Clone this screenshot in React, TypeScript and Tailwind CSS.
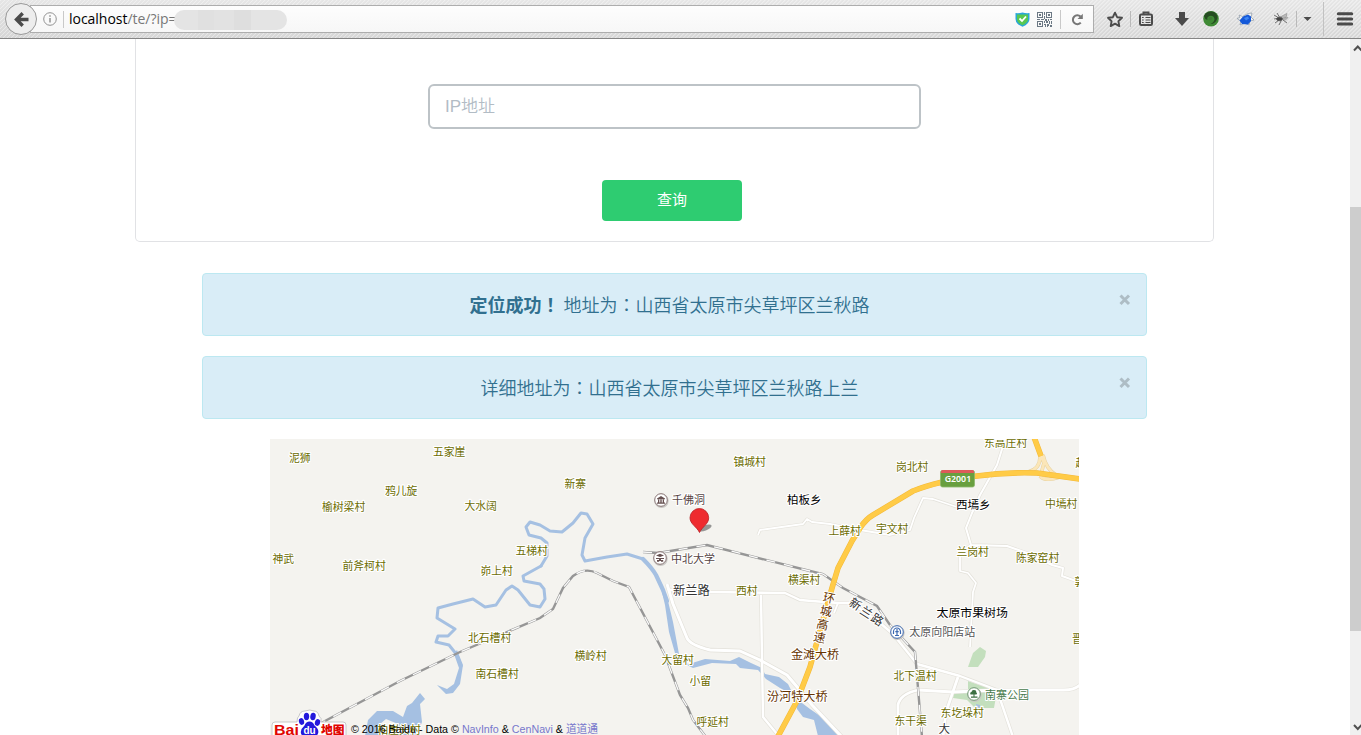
import React from "react";

type Tone = "village" | "town" | "poi" | "bridge" | "park" | "station" | "road";

type Label = { t: string; x: number; y: number; tone?: Tone; size?: number };

const TONES: Record<Tone, string> = {
  village: "fill-[#6c6c00]",
  town: "fill-[#000000]",
  poi: "fill-[#554444]",
  bridge: "fill-[#663300]",
  park: "fill-[#477a4c]",
  station: "fill-[#555555]",
  road: "fill-[#333333]",
};

const LABELS: Label[] = [
  { t: "泥狮", x: 289, y: 458 },
  { t: "五家崖", x: 433, y: 451.5 },
  { t: "鸦儿旋", x: 385, y: 491 },
  { t: "榆树梁村", x: 322, y: 507 },
  { t: "大水阔", x: 464.5, y: 505.5 },
  { t: "五梯村", x: 515.5, y: 550.5 },
  { t: "神武", x: 272.5, y: 559 },
  { t: "前斧柯村", x: 342.5, y: 565.5 },
  { t: "峁上村", x: 480.5, y: 570.5 },
  { t: "新寨", x: 564.5, y: 484 },
  { t: "镇城村", x: 733.5, y: 462 },
  { t: "千佛洞", x: 672, y: 499.5, tone: "poi", size: 11 },
  { t: "中北大学", x: 671, y: 558, tone: "poi", size: 11 },
  { t: "柏板乡", x: 787, y: 499.5, tone: "town", size: 11.5 },
  { t: "横渠村", x: 788, y: 579.5 },
  { t: "东高庄村", x: 984, y: 442.5 },
  { t: "岗北村", x: 896, y: 466.5 },
  { t: "上薛村", x: 828.5, y: 530.5 },
  { t: "宇文村", x: 876, y: 529 },
  { t: "西墕乡", x: 956, y: 504, tone: "town", size: 11.5 },
  { t: "中墕村", x: 1045, y: 504 },
  { t: "兰岗村", x: 956.5, y: 551.5 },
  { t: "陈家窑村", x: 1016, y: 557.5 },
  { t: "赵", x: 1075.5, y: 463 },
  { t: "郭", x: 1074.5, y: 582 },
  { t: "北石槽村", x: 468, y: 638 },
  { t: "南石槽村", x: 475.5, y: 674 },
  { t: "柏崖头村", x: 377.5, y: 730 },
  { t: "新兰路", x: 673, y: 590, tone: "road", size: 12.3 },
  { t: "西村", x: 736, y: 590.5 },
  { t: "横岭村", x: 574.5, y: 655.5 },
  { t: "大留村", x: 661.5, y: 660 },
  { t: "金滩大桥", x: 791, y: 654.5, tone: "bridge", size: 12 },
  { t: "小留", x: 689.5, y: 680.5 },
  { t: "汾河特大桥", x: 767, y: 696.5, tone: "bridge", size: 12.1 },
  { t: "呼延村", x: 696.5, y: 722 },
  { t: "太原市果树场", x: 936.5, y: 612.5, tone: "town", size: 11.9 },
  { t: "太原向阳店站", x: 909.2, y: 631.5, tone: "station", size: 11 },
  { t: "晋", x: 1072, y: 639 },
  { t: "北下温村", x: 893.5, y: 676 },
  { t: "南寨公园", x: 985, y: 694, tone: "park", size: 11 },
  { t: "东圪垛村", x: 940.6, y: 713 },
  { t: "东干渠", x: 894.5, y: 720.5 },
  { t: "大", x: 938.5, y: 728, tone: "road", size: 11.5 },
];

const TURNED = [
  { t: "环", x: 829, y: 598, a: 12, c: "fill-[#663300]" },
  { t: "城", x: 826, y: 611, a: 12, c: "fill-[#663300]" },
  { t: "高", x: 822.5, y: 624.5, a: 12, c: "fill-[#663300]" },
  { t: "速", x: 819.5, y: 637.5, a: 12, c: "fill-[#663300]" },
  { t: "新", x: 855.5, y: 604, a: 33, c: "fill-[#333333]" },
  { t: "兰", x: 866.5, y: 612, a: 33, c: "fill-[#333333]" },
  { t: "路", x: 877.5, y: 619.5, a: 33, c: "fill-[#333333]" },
];

const ROADS: { d: string; w: number }[] = [
  { w: 1.8, d: "M758 535L760 530L803 524L807 519L812 522L830 524L860 530L890 535L910 530L914 518L923 498L933 499L957 507" },
  { w: 2, d: "M1003 446L997 465L980 495L972 513L966 528L971 545L1007 546L1027 553L1052 565L1063 568L1062 576L1079 582" },
  { w: 1.8, d: "M971 545L960 553L960 571L968 573L976 583L973 592L970 647" },
  { w: 3, d: "M667 584L673 604L687 638Q690 645 710 650L740 651L760 660L787 675L798 688L812 705L842 737" },
  { w: 2.4, d: "M670 590L710 592L785 593L800 600L812 601L838 603L852 603L880 623L893 634L917 664L960 676L997 690L1013 737" },
  { w: 2.4, d: "M761 595L762 658L763 717L777 734" },
  { w: 2, d: "M838 603L834 613" },
  { w: 2.8, d: "M898 736L898 705Q900 694 918 690L953 692L997 690L1064 690Q1074 690 1080 685" },
  { w: 2.8, d: "M958 677L946 712L943 737" },
];

const RAILS = [
  "M318 726L325 721L400 681L460 652L540 618L553 609L563 588L573 576Q585 567 597 573L613 581L629 587L665 655L680 695L688 708L693 720L706 737",
  "M643 552L658 553L707 545L810 571L823 574L843 588L877 606L890 625L915 652L918 688L922 737",
];

const HIGHWAY =
  "M776 740L797 701L810 667L823 620L832 588L838 568L852 541L860 528Q866 519 873 515L913 491Q938 481 977 476Q1005 472 1037 473L1080 479M1034 437L1041 456";

const RAMP = "M1041 455L1044 463L1041 474M1043 455Q1046 469 1056 475M1040 457Q1040 469 1028 472M1040 476Q1045 482 1060 477";

function Railway({ d }: { d: string }) {
  return (
    <g fill="none">
      <path d={d} stroke="#969696" strokeWidth="2.4" />
      <path d={d} stroke="#fafafa" strokeWidth="1.3" strokeDasharray="9 9" />
    </g>
  );
}

function PoiRing({ x, y, c }: { x: number; y: number; c: string }) {
  return (
    <>
      <circle cx={x + 0.5} cy={y + 0.8} r="7.2" fill="#c9c7c4" />
      <circle cx={x} cy={y} r="6.3" fill="#fff" stroke={c} strokeWidth="1" />
    </>
  );
}

function BaiduMap() {
  return (
    <svg className="block h-[296px] w-[809px] shrink-0 bg-[#f4f3ef]" viewBox="270 439 809 296">
      <path d="M968 667L973 653L980 647L986 651L985 657L978 667Z" fill="#c3dfbd" />
      <path d="M968 681L997 691L994 708L975 708L967 700L953 698L954 693L968 693Z" fill="#c3dfbd" />
      <path d="M976 704l4 1v3l-4-1z" fill="#a5bfdf" />
      <g fill="none" stroke="#a5c0e2" strokeLinejoin="round" strokeLinecap="round">
        <path
          strokeWidth="3"
          d="M541 566L547 556L547 543L541 538L529 535L526 527L530 522L540 525L550 531L562 532L573 523L581 513L587 514L593 524L585 538L582 555L585 561L607 557L627 554L643 559"
        />
        <path strokeWidth="4.2" d="M643 559Q652 568 656 575L663 590L667 601" />
        <path
          strokeWidth="3"
          d="M541 566L523 576L524 581L540 584L544 589L545 599L540 607L530 605L518 590L512 586L506 590L496 605L485 607L473 599L453 604L438 608L437 618L455 629L448 636L438 636L436 642L449 645L457 655L461 666"
        />
      </g>
      <path d="M457 650L463 665L460 684L453 693L446 694L437 685L447 689L454 684L459 668L454 654Z" fill="#a5c0e2" />
      <path d="M661 588L668 601L673 622L679 654L675 653L669 632L665 605Z" fill="#a5c0e2" />
      <path d="M677 660L689 664L705 659L730 661L739 657L751 663L762 668L765 674L779 677L788 684L791 690L797 692L798 700L810 709L829 722L840 736L818 736L814 720L803 717L797 709L795 696L780 688L766 679L758 670L740 668L736 664L712 663L693 668Z" fill="#a5c0e2" />
      <path
        fillRule="evenodd"
        d="M365 736L368 720L377 711L393 711L403 717L407 706L412 703L420 693L425 699L420 704L422 722L416 737L404 737L398 724L386 719L380 724L379 737Z"
        fill="#a5c0e2"
      />
      <g fill="none" strokeLinejoin="round">
        {ROADS.map((r) => (
          <path key={r.d} d={r.d} stroke="#e3e1da" strokeWidth={r.w + 1.3} />
        ))}
        {ROADS.map((r) => (
          <path key={r.d} d={r.d} stroke="#ffffff" strokeWidth={r.w} />
        ))}
      </g>
      {RAILS.map((d) => (
        <Railway key={d} d={d} />
      ))}
      <g fill="none" strokeLinejoin="round">
        <path d={RAMP} stroke="#e5cf9c" strokeWidth="3.6" />
        <path d={RAMP} stroke="#fbe6b8" strokeWidth="2.8" />
        <path d={HIGHWAY} stroke="#f3b93a" strokeWidth="5.6" />
        <path d={HIGHWAY} stroke="#ffcb47" strokeWidth="4.6" />
      </g>
      <g>
        <rect x="940.5" y="470.5" width="34" height="16.5" rx="2" fill="#689f3f" stroke="#8db86d" strokeWidth="0.8" />
        <path d="M941 473v-1.500q0-1.500 1.500-1.500h30q1.500 0 1.500 1.500v1.500z" fill="#dd5a5a" />
        <text x="944.7" y="482.300" fill="#fff" textLength="26.5" lengthAdjust="spacingAndGlyphs" className="font-['Noto_Sans'] text-[9px] font-semibold">
          G2001
        </text>
      </g>

      <g className="font-['Noto_Sans_CJK_SC',sans-serif]" stroke="#fff" strokeWidth="2.2" strokeLinejoin="round" paintOrder="stroke">
        {LABELS.map((l) => (
          <text
            key={l.t + l.x}
            x={l.x}
            y={l.y + 0.5 + (l.size ?? 10.8) * 0.37}
            fontSize={l.size ?? 10.8}
            className={TONES[l.tone ?? "village"]}
          >
            {l.t}
          </text>
        ))}
        {TURNED.map((l) => (
          <text
            key={l.t + l.x}
            x={l.x}
            y={l.y + 4.4}
            fontSize="12"
            textAnchor="middle"
            transform={`rotate(${l.a} ${l.x} ${l.y})`}
            className={l.c}
          >
            {l.t}
          </text>
        ))}
      </g>

      <PoiRing x={661} y={500} c="#8a7676" />
      <path d="M657 498.500l4-2.500 4 2.500v.7h-8zM658 499.500h1.300v3H658zM660.300 499.500h1.400v3h-1.400zM662.700 499.500h1.300v3h-1.300zM657 502.600h8v1.200h-8z" fill="#665050" />
      <PoiRing x={660} y={558} c="#8a7676" />
      <path d="M656 555.500l4-1.800 4 1.800-4 1.600zM656 558h8v1.100h-8zM657 560h2.200v1.800H657zM661 560h2.200v1.800H661zM659 559h2v2h-2z" fill="#665050" />
      <PoiRing x={897} y={632} c="#3c69b1" />
      <path d="M893.500 634v-2.300a3.500 3.700 0 0 1 7 0v2.300M897 629v6M895 635.500h4M895.300 631.700h3.400" fill="none" stroke="#3c69b1" strokeWidth="1.200" />
      <PoiRing x={974} y={694} c="#6f9a72" />
      <path d="M970.500 694.500q-1-2 1-2.500.3-2.200 2.500-2 2.500 0 2.200 2.300 1.600.8.300 2.200h-2v2h3v1.300h-6.500v-1.300h2.500v-2z" fill="#3c7042" />

      <ellipse cx="705" cy="528" rx="7" ry="2.600" fill="#777" opacity="0.75" transform="rotate(-20 705 528)" />
      <path d="M699.500 532.500C697 527 690 524 690 517.800a9.300 9.200 0 0 1 18.700 0C708.700 524 702 527 699.500 532.500z" fill="#ee2b2f" stroke="#b62024" strokeWidth="0.8" />

      <g>
        <path d="M275 722h22q0-5 2-6 1-5 6-5 5-2 9 0 4 0 5 5 3 2 2 6h22q3 0 3 3v12h-74v-12q0-3 3-3z" fill="#fff" stroke="#bbb" strokeWidth="0.8" />
        <text x="274" y="735" className="fill-[#e10601] font-['Liberation_Sans'] text-[15.5px] font-bold" textLength="25" lengthAdjust="spacingAndGlyphs">
          Bai
        </text>
        <g fill="#2319dc">
          <ellipse cx="301.500" cy="721.500" rx="2.600" ry="3.400" transform="rotate(-15 301.500 721.500)" />
          <ellipse cx="306.500" cy="716.500" rx="2.700" ry="3.700" />
          <ellipse cx="313" cy="716.500" rx="2.700" ry="3.700" transform="rotate(10 313 716.500)" />
          <ellipse cx="317.500" cy="722.500" rx="2.600" ry="3.400" transform="rotate(15 317.500 722.500)" />
          <path d="M309.500 721.500q3.500 0 5 4 5 4 3.500 8-1 3-4 3h-9q-3 0-4-3-1-4 3.500-8 1.500-4 5-4z" />
        </g>
        <text x="309.500" y="733.500" textAnchor="middle" className="fill-white font-['Liberation_Sans'] text-[10px] font-bold">
          du
        </text>
        <text x="321" y="734" className="fill-[#e10601] font-['Noto_Sans_CJK_SC'] text-[11.8px] font-black">
          地图
        </text>
      </g>
      <text x="351" y="733" textLength="247" lengthAdjust="spacingAndGlyphs" className="fill-black font-['Liberation_Sans','Noto_Sans_CJK_SC',sans-serif] text-[11px]">
        © 2016 Baidu - Data © <tspan className="fill-[#7777cc]">NavInfo</tspan> &amp; <tspan className="fill-[#7777cc]">CenNavi</tspan> &amp;{" "}
        <tspan className="fill-[#7777cc]">道道通</tspan>
      </text>
    </svg>
  );
}

function QrIcon() {
  return (
    <svg className="size-[15px]" viewBox="0 0 15 15" fill="#6b7884" shapeRendering="crispEdges">
      <path fillRule="evenodd" d="M0 0h6v6H0zM1 1v4h4V1zM9 0h6v6H9zM10 1v4h4V1zM0 9h6v6H0zM1 10v4h4v-4z" />
      <path d="M2 2h2v2H2zM11 2h2v2h-2zM2 11h2v2H2zM7 0h1v3H7zM7 4h1v3H7zM0 7h3v1H0zM4 7h3v1H4zM8 7h2v2H8zM11 7h1v2h-1zM13 7h2v1h-2zM7 9h1v2H7zM9 9h2v2H9zM12 9h1v2h-1zM14 9h1v3h-1zM7 12h2v1H7zM8 13h1v2H8zM10 12h2v2h-2zM12 11h1v1h-1zM13 13h2v2h-2zM10 14h1v1h-1z" />
    </svg>
  );
}

function Toolbar() {
  return (
    <header className="relative h-[39px] shrink-0 border-b border-[#858585] bg-[repeating-linear-gradient(135deg,#ffffff66_0px_0.7px,transparent_1.4px_2.83px),linear-gradient(#e6e6e6,#d6d6d6)]">
      <div className="flex h-[38px] items-center pl-[30px]">
        <div className="flex h-7 w-[1064px] items-center border border-[#adadad] bg-[linear-gradient(#fdfdfd,#f7f7f7)] pl-[12px]">
          <svg className="size-[14px]" viewBox="0 0 14 14" fill="none" stroke="#929292">
            <circle cx="7" cy="7" r="6.300" />
            <path d="M7 6v4.500M7 3.300v1.500" strokeWidth="1.500" />
          </svg>
          <i className="ml-[6px] mr-[5px] h-[17px] w-px bg-[#c9c9c9]" />
          <span className="font-['Open_Sans',sans-serif] text-[14px] leading-none tracking-[-0.03px] text-[#777]">
            <span className="text-black">localhost</span>/te/?ip=
          </span>
          <i className="-ml-[2px] mt-[2px] flex h-5 w-[113px] overflow-hidden rounded-full bg-[#e4e4e4]">
            <i className="ml-6 w-4 bg-[#e0e0e0]" />
            <i className="w-5 bg-[#e2e2e2]" />
            <i className="w-[17px] bg-[#dedede]" />
          </i>
          <div className="ml-auto flex items-center pr-[10px]">
            <svg className="size-[15px]" viewBox="0 0 15 15">
              <path d="M.5 1Q4 1.500 7.500.5 11 1.500 14.500 1v6q0 5-7 7.700Q.5 12 .5 7z" fill="#29a6d9" />
              <path d="M2 2.500h11V7q0 4-5.500 6.300Q2 11 2 7z" fill="#58c850" />
              <path d="M4.500 6.500l2.500 2.500 4-4.500" fill="none" stroke="#fff" strokeWidth="1.800" />
            </svg>
            <i className="w-[7px]" />
            <QrIcon />
            <i className="ml-[8px] mr-[10px] h-[19px] w-px bg-[#c9c9c9]" />
            <svg className="mr-[-1px] size-[13px]" viewBox="0 0 13 13" fill="none" stroke="#777" strokeWidth="2">
              <path d="M9.800 9.700A4.500 4.500 0 1 1 9.500 3.500" />
              <path d="M11.800.7v5.300H6.500z" fill="#777" stroke="none" />
            </svg>
          </div>
        </div>
        <svg className="h-[38px] w-[267px] shrink-0" viewBox="1094 0 267 38">
          <path d="M1115 12.700l2.100 4.500 4.900.6-3.600 3.400.9 4.900-4.300-2.400-4.300 2.400.9-4.900-3.600-3.400 4.900-.6z" fill="none" stroke="#4b4b4b" strokeWidth="1.900" strokeLinejoin="round" />
          <path d="M1130.500 11v16M1296.500 11v16" stroke="#b9b9b9" />
          <path d="M1323.500 2v34" stroke="#c2c2c2" />
          <g fill="none" stroke="#4b4b4b">
            <rect x="1140" y="14.500" width="12" height="10.500" rx="1.200" strokeWidth="2" />
            <path d="M1143.500 14v-1.500h5V14" strokeWidth="2" />
            <path d="M1142 17.500h1.700M1145.500 17.500h5M1142 20h1.700M1145.500 20h5M1142 22.500h1.700M1145.500 22.500h5" strokeWidth="1.100" />
          </g>
          <path d="M1179 12h6v6h4l-7 8-7-8h4z" fill="#4b4b4b" />
          <circle cx="1211" cy="18.800" r="7.800" fill="#3f8a35" />
          <path d="M1204 16q2-5 8-4.500 5.500 1 5.500 6.500-2 6-7 6 4-2 4-5-1-4-5-3-3 1-2 4-3-1-3.500-4z" fill="#254c21" />
          <path d="M1208.500 18q2-2 4 0-1 3-4 2z" fill="#3f7a35" />
          <path d="M1239 15l3.500 1.500 5.500-3 4-0.500-1 4 3 3-4 1-1 4-4-2-5 2 1-4-4-2.500 3-1z" fill="#f4f4f4" stroke="#8b98a6" strokeWidth="0.700" />
          <path d="M1239.500 20.500l3.500-4 5-2 3 2v4.500l-3 3.500-6-.5z" fill="#1559d8" />
          <path d="M1244 18l4-1.500 1 2-3 2z" fill="#3d86f4" />
          <g stroke="#555" strokeWidth="0.800" fill="none">
            <path d="M1274 15l5 3-5 1M1275 23l4-3M1279 25l2-4M1277 13l3 5M1283 20l4 3" />
            <path d="M1280 17l7-3.500-1 4zM1282 18.500l6-1-3 3z" fill="#bbb" stroke="#999" />
            <ellipse cx="1279.500" cy="19" rx="3" ry="1.800" fill="#444" />
          </g>
          <path d="M1303.500 17h8l-4 4z" fill="#4b4b4b" />
          <path d="M1338.300 13.700h13.400M1338.300 18.900h13.400M1338.300 24.100h13.400" stroke="#4b4b4b" strokeWidth="3" strokeLinecap="round" />
        </svg>
      </div>
      <span className="absolute left-[5px] top-[3px] flex size-8 items-center justify-center rounded-full border border-[#999] bg-[#ededed]">
        <svg className="size-[15px]" viewBox="0 0 15 15" fill="none" stroke="#4b4b4b" strokeWidth="3.400">
          <path d="M8.700 1.200L2.500 7.500l6.200 6.300M3 7.500h11.500" />
        </svg>
      </span>
    </header>
  );
}

function Mark({ children }: { children: string }) {
  return <span className="font-['Noto_Sans_CJK_TC',sans-serif]" lang="zh-Hant">{children}</span>;
}

function Alert({ children }: { children: React.ReactNode }) {
  return (
    <div className="flex h-[63px] w-[945px] items-center rounded-[4px] border border-[#bce8f1] bg-[#d9edf7] pl-[17px] pr-[15px] font-['Noto_Sans_CJK_SC',sans-serif] text-[18px] text-[#31708f]">
      <p className="flex-1 text-center font-[350]">{children}</p>
      <button aria-label="Close" className="mb-[11px] h-[10px]">
        <svg className="size-[12px]" viewBox="0 0 12 12" fill="none" stroke="#aebdc5" strokeWidth="3">
          <path d="M1.500 1.500l8.500 8.500M10 1.500L1.500 10" />
        </svg>
      </button>
    </div>
  );
}

function Scrollbar() {
  return (
    <div className="flex w-[11px] shrink-0 flex-col justify-between overflow-hidden bg-[#f0f0f0]">
      <svg className="h-[17px] w-[15px] shrink-0" viewBox="0 0 15 17" fill="none" stroke="#505050" strokeWidth="2">
        <path d="M4 11.500l3.800-4 3.800 4" />
      </svg>
      <div className="-mb-[1px] mt-[151px] h-[424px] w-full shrink-0 bg-[#cdcdcd]" />
      <svg className="mt-auto h-[17px] w-[15px] shrink-0" viewBox="0 0 15 17" fill="none" stroke="#505050" strokeWidth="2">
        <path d="M4 7l3.800 4 3.800-4" />
      </svg>
    </div>
  );
}

export default function App() {
  return (
    <div className="flex h-[735px] w-[1361px] flex-col overflow-hidden bg-white">
      <Toolbar />
      <div className="flex min-h-0 flex-1">
        <main className="flex w-[1350px] shrink-0 flex-col items-center overflow-hidden pr-[1px]">
          <section className="flex h-[203px] w-[1079px] shrink-0 flex-col items-center rounded-b-[5px] border border-t-0 border-[#e1e2e5] pt-[45px]">
            <input
              placeholder="IP地址"
              className="h-[45px] w-[493px] rounded-[6px] border-2 border-[#bdc3c7] px-[15px] font-['Liberation_Sans','Noto_Sans_CJK_SC',sans-serif] text-[17px] font-[350] placeholder:text-[#b2bcc5]"
            />
            <button className="mr-[5px] mt-[51px] h-[41px] w-[140px] rounded-[4px] bg-[#2ecc71] pb-[2px] font-['Noto_Sans_CJK_SC',sans-serif] text-[15px] text-white">
              查询
            </button>
          </section>
          <div className="mt-[31px] flex shrink-0 flex-col gap-5">
            <Alert>
              <strong className="font-bold">
                定位成功<Mark>！</Mark>
              </strong>{" "}
              地址为<Mark>：</Mark>山西省太原市尖草坪区兰秋路
            </Alert>
            <Alert>
              详细地址为<Mark>：</Mark>山西省太原市尖草坪区兰秋路上兰
            </Alert>
          </div>
          <div className="mt-5 flex">
            <BaiduMap />
          </div>
        </main>
        <Scrollbar />
      </div>
    </div>
  );
}
